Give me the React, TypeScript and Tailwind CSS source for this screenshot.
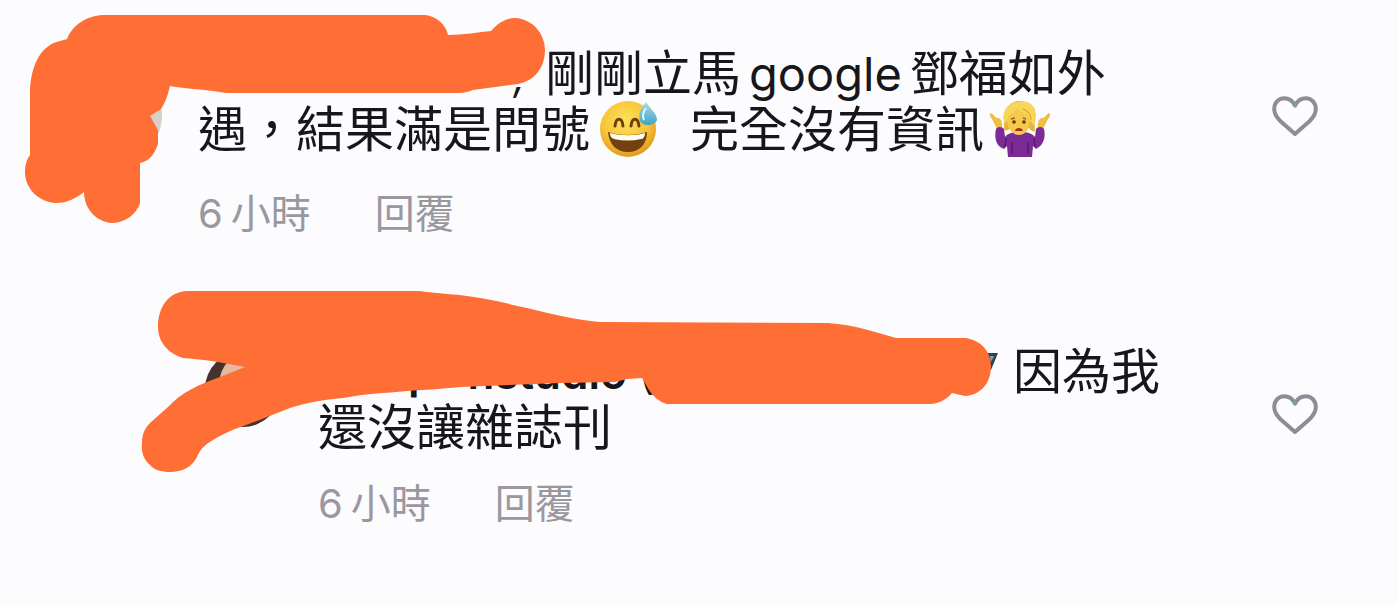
import type { ReactNode } from 'react';

interface CommentProps {
  avatar: ReactNode;
  children: ReactNode;
  time: string;
  metaClass: string;
  likeClass: string;
  className: string;
  cover: ReactNode;
}

function HeartIcon() {
  return (
    <svg viewBox="0 0 48 42" className="h-[42px] w-12" fill="none" stroke="#8f8c96" strokeWidth="4" strokeLinejoin="round">
      <path d="M24 10.5C21.5 5.5 17.5 3.2 13.2 3.2C7.3 3.2 3.2 8 3.2 14C3.2 19 5.6 22.4 9.5 26.2L24 39L38.5 26.2C42.4 22.4 44.8 19 44.8 14C44.8 8 40.7 3.2 34.8 3.2C30.5 3.2 26.5 5.5 24 10.5Z" />
      <path d="M22.5 8.5L24 11L25.5 8.5" stroke="#6fa795" strokeWidth="3" />
    </svg>
  );
}

function SweatSmile() {
  return (
    <svg viewBox="0 0 60 60" role="img" aria-label="😅" className="-mt-8 -mb-6 ml-2 inline-block size-[60px] align-middle">
      <defs>
        <radialGradient id="face" cx="45%" cy="35%" r="65%">
          <stop offset="0" stopColor="#fde25a" />
          <stop offset="0.65" stopColor="#f8c336" />
          <stop offset="1" stopColor="#e09a1d" />
        </radialGradient>
        <linearGradient id="drop" x1="0" y1="0" x2="0" y2="1">
          <stop offset="0" stopColor="#a9dcea" />
          <stop offset="1" stopColor="#3fa3c6" />
        </linearGradient>
      </defs>
      <circle cx="30" cy="29" r="28" fill="url(#face)" />
      <path d="M17 26C18 17 24 17 25 26M33 26C34 17 40 17 41 26" fill="none" stroke="#6d3f0c" strokeWidth="3" strokeLinecap="round" />
      <path d="M10 32C21 36 38 36 49 32C49 45 41 52 30 52C19 52 11 45 10 32Z" fill="#73400f" />
      <path d="M12 33C23 36 37 36 47 33C47 37 45 39 43 39C34 41 25 41 16 39C14 38 12 37 12 33Z" fill="#fffdf0" />
      <path d="M48 2C42 9 40 15 42 21C44 27 57 26 59 20C59 13 52 9 48 2Z" fill="url(#drop)" />
      <path d="M48 8C45 12 44 16 46 20" fill="none" stroke="#e4f6fa" strokeWidth="2" />
    </svg>
  );
}

function ShrugWoman() {
  return (
    <svg viewBox="0 0 64 60" role="img" aria-label="🤷‍♀️" className="-mt-8 -mb-6 ml-1 inline-block h-[60px] w-16 align-middle">
      <path d="M2 16C1 12 4 12 8 18C12 17 15 21 14 28L9 31C8 25 5 21 2 16Z" fill="#efbf45" />
      <path d="M62 16C63 12 60 12 56 18C52 17 49 21 50 28L55 31C56 25 59 21 62 16Z" fill="#efbf45" />
      <path d="M8 29C11 26 14 27 16 29L17 37C22 30 42 30 47 37L48 29C50 27 53 26 56 29C58 38 55 46 48 49L45 46L44 57H20L19 46L16 49C8 46 6 38 8 29Z" fill="#7c2b96" />
      <path d="M18 38L17 47M46 38L47 47M24 42V54M40 42V54" stroke="#571b73" strokeWidth="1.5" />
      <path d="M16 30C17 24 14 18 17 11C21 2 30 -1 37 2C46 3 49 11 47 20C46 25 47 28 47 31C45 32 43 31 41 28H22C21 30 19 31 16 30Z" fill="#e9b33a" />
      <path d="M19 18C20 10 25 8 31 8C39 8 43 13 42 20C42 29 37 35 31 35C24 35 19 28 19 18Z" fill="#f6c84c" />
      <path d="M16 22C14 13 19 3 29 2C40 -1 49 6 47 17C46 20 46 22 46 25C42 23 42 17 38 14C34 13 31 11 29 8C26 13 21 14 20 17C19 21 18 24 16 22Z" fill="#f8d65c" />
      <path d="M35 9C40 11 43 15 43 20" fill="none" stroke="#e3ad39" strokeWidth="1.5" />
      <circle cx="26" cy="22" r="1.8" fill="#5d3816" />
      <circle cx="36" cy="22" r="1.8" fill="#5d3816" />
      <path d="M23 19L27 18M35 18L38 19" stroke="#99641d" strokeWidth="1.5" />
      <path d="M27 31C28 27 34 27 35 31Z" fill="#9d3524" />
    </svg>
  );
}

function Comment({ avatar, children, time, metaClass, likeClass, className, cover }: CommentProps) {
  return (
    <article className={`relative flex items-start pr-[79px] ${className}`}>
      {avatar}
      <div className="min-w-0 flex-1">
        <p className="whitespace-nowrap text-[49px] leading-[56px] text-[#17161a]">{children}</p>
        <div className={`flex gap-16 text-[40px] leading-[48px] text-[#9a989e] ${metaClass}`}>
          <time className="flex gap-2">
            <span>{time}</span>
            <span>小時</span>
          </time>
          <button type="button">回覆</button>
        </div>
      </div>
      <button type="button" aria-label="讚" className={`shrink-0 ${likeClass}`}>
        <HeartIcon />
      </button>
      {cover}
    </article>
  );
}

export default function App() {
  return (
    <main
      lang="zh-Hant"
      className="flex min-h-screen flex-col gap-11 overflow-hidden bg-[#fcfbfd] pb-16 font-['Inter','Noto_Sans_CJK_TC',sans-serif]"
    >
      <Comment
        className="pl-[62px]"
        time="6"
        metaClass="mt-8"
        likeClass="mt-[95px]"
        avatar={<div className="mt-[65px] mr-9 size-[100px] shrink-0 rounded-full bg-[#d9cfc9]" />}
        cover={
          <svg viewBox="0 0 560 235" className="pointer-events-none absolute top-0 left-0 h-[235px] w-[560px]" aria-hidden="true">
            <path
              fill="#ff6e35"
              d="M106 15L425 15C437 16 446 25 448 35C462 35 480 32 491 31C498 23 506 18 515 18C533 19 545 34 545 50C545 68 534 81 518 84L473 90C466 93 460 93 455 93L226 93C205 89 185 89 170 86C168 95 165 103 161 109L150 116L158 130L158 144C155 153 150 161 140 163L140 203C136 215 125 223 111 223C95 221 84 208 84 192C76 198 68 203 56 203C38 202 25 188 25 172C25 165 27 159 30 155L30 88C32 62 42 45 60 41L67 39C74 22 90 15 106 15Z"
            />
          </svg>
        }
      >
        <span className="block pt-[46px]">
          <span className="inline-block w-[347px] pr-5 text-right text-[40px] leading-none italic">,</span>
          剛剛立馬<span className="mx-2 text-[47px] leading-none">google</span>鄧福如外
        </span>
        遇，結果滿是問號
        <SweatSmile />
        <span className="ml-8">完全沒有資訊</span>
        <ShrugWoman />
      </Comment>

      <Comment
        className="pl-[205px]"
        time="6"
        metaClass="mt-6"
        likeClass="mt-[111px]"
        avatar={
          <svg viewBox="0 0 76 76" className="mt-[69px] mr-[37px] size-[76px] shrink-0" aria-hidden="true">
            <circle cx="38" cy="38" r="38" fill="#44342c" />
            <ellipse cx="46" cy="34" rx="32" ry="34" fill="#e6b9a2" />
          </svg>
        }
        cover={
          <svg viewBox="0 282 1010 245" className="pointer-events-none absolute top-0 left-0 h-[245px] w-[1010px]" aria-hidden="true">
            <path fill="#2f4252" d="M984 353H998L991 370H984Z" />
            <path fill="#83a5b5" d="M990 356H994L991 362Z" />
            <path
              fill="#ff6e35"
              d="M187 291L419 291C440 294 460 294 480 298C500 301 512 305 527 308C552 314 575 320 600 322L828 323C855 325 875 332 896 338L966 338C982 341 991 352 991 366C991 384 980 395 965 396L952 393C946 400 938 404 930 404L667 404C659 402 652 395 649 390L642 378L627 379L615 382L560 383L460 387C440 389 424 390 407 391C385 393 363 394 343 398C323 400 308 402 290 408L267 417C245 426 229 430 213 440C204 445 200 450 197 457C192 467 182 472 170 472C162 472 154 470 150 465C143 459 141 451 142 443C142 434 145 428 150 423L168 407C182 392 198 385 220 377L245 367C220 362 201 359 183 358C167 353 158 341 158 327C158 306 169 292 187 291Z"
            />
          </svg>
        }
      >
        <span className="block pt-[62px]">
          <span className="inline-block w-[695px] pl-[90px] text-[44px] leading-none font-semibold">
            p<span className="ml-8">nstudio</span>
            <span className="ml-3 font-normal">(</span>
          </span>
          因為我
        </span>
        還沒讓雜誌刊
      </Comment>
    </main>
  );
}
